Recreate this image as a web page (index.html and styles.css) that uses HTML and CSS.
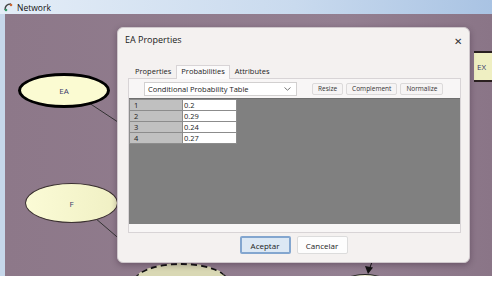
FILE: index.html
```html
<!DOCTYPE html>
<html lang="en">
  <head>
    <meta charset="UTF-8" />
    <title>Network</title>
    <link rel="stylesheet" href="styles.css">
  </head>
  <body>

    <div class="app">
      <div class="titlebar">
        <svg class="app-icon" width="9" height="9" viewBox="0 0 9 9">
          <path d="M1 7 C1 3 3 1 7 1" stroke="#444" stroke-width="1.4" fill="none"/>
          <circle cx="7" cy="2" r="1.3" fill="#c63"/>
          <circle cx="2" cy="7" r="1.3" fill="#396"/>
        </svg>
        <span>Network</span>
      </div>

      <div class="canvas">
        <svg class="edges" width="492" height="281">
          <line x1="80" y1="97" x2="130" y2="130" stroke="#333" stroke-width="1"/>
          <line x1="88" y1="212" x2="130" y2="248" stroke="#333" stroke-width="1"/>
          <line x1="372" y1="262" x2="369" y2="270" stroke="#111" stroke-width="1"/>
          <polygon points="365,266 373,267.5 368,274" fill="#111"/>
        </svg>

        <div class="node node-ea">EA</div>
        <div class="node node-f">F</div>
        <div class="node node-ex">EX</div>
        <div class="node node-b1"></div>
        <div class="node node-b2"></div>

        <div class="dialog">
          <div class="dialog-head">
            <span>EA Properties</span>
            <span class="close">&#x2715;</span>
          </div>

          <div class="tabs">
            <div class="tab">Properties</div>
            <div class="tab active">Probabilities</div>
            <div class="tab">Attributes</div>
          </div>

          <div class="panel">
            <div class="toolbar">
              <div class="select">
                <span>Conditional Probability Table</span>
                <svg width="7" height="4" viewBox="0 0 7 4"><path d="M0.5 0.5 L3.5 3.2 L6.5 0.5" stroke="#777" fill="none"/></svg>
              </div>
              <button class="tool-btn">Resize</button>
              <button class="tool-btn">Complement</button>
              <button class="tool-btn">Normalize</button>
            </div>

            <div class="grid-area">
              <table class="cpt">
                <tbody>
                  <tr><td class="row-head">1</td><td class="cell">0.2</td></tr>
                  <tr><td class="row-head">2</td><td class="cell">0.29</td></tr>
                  <tr><td class="row-head">3</td><td class="cell">0.24</td></tr>
                  <tr><td class="row-head">4</td><td class="cell">0.27</td></tr>
                </tbody>
              </table>
            </div>
          </div>

          <div class="dialog-foot">
            <button class="btn btn-default">Aceptar</button>
            <button class="btn">Cancelar</button>
          </div>
        </div>
      </div>
    </div>

  </body>
</html>
```

FILE: styles.css
```css
* {
  box-sizing: border-box;
  font-family: 'Open Sans', 'Noto Sans', sans-serif;
}

body {
  margin: 0;
  padding: 0;
  background-color: #fff;
  width: 492px;
  height: 281px;
  overflow: hidden;
}

.app {
  display: flex;
  flex-direction: column;
  width: 492px;
  height: 276px;
  background-color: #c6d7ea;
  padding-left: 5px;
}

.titlebar {
  height: 14px;
  margin-left: -5px;
  padding-left: 4px;
  display: flex;
  align-items: center;
  gap: 4px;
  font-size: 8.5px;
  color: #111;
  background: linear-gradient(to right, #e4edf7, #c9daee 60%, #a9c3e3);
}

.canvas {
  flex: 1;
  position: relative;
  overflow: hidden;
  background-color: #8f7b8d;
  background: linear-gradient(to right, #8d7889, #937f91 70%, #8a7587);
}

.edges {
  position: absolute;
  left: -5px;
  top: -14px;
}

/* network nodes */
.node {
  position: absolute;
  display: flex;
  align-items: center;
  justify-content: center;
  font-size: 8px;
  color: #3a3a6a;
  background-color: #fbfbd2;
  border-radius: 50%;
}

.node-ea {
  left: 13px;
  top: 59px;
  width: 92px;
  height: 35px;
  border: 3px solid #000;
}

.node-f {
  left: 20px;
  top: 169px;
  width: 93px;
  height: 40px;
  border: 1px solid #3a3030;
  background: linear-gradient(to right, #fbfbd6, #f0f0c4);
}

.node-ex {
  left: 469px;
  top: 37px;
  width: 30px;
  height: 31px;
  border-radius: 0;
  border-top: 2px solid #2a2020;
  border-bottom: 2px solid #2a2020;
  background-color: #efefc2;
  justify-content: flex-start;
  padding-left: 3px;
}

.node-b1 {
  left: 128px;
  top: 249px;
  width: 96px;
  height: 40px;
  border: 1px solid #222;
  border-top: 2px dashed #111;
  background-color: #d9d8b4;
}

.node-b2 {
  left: 331px;
  top: 260px;
  width: 58px;
  height: 30px;
  border: 1px solid #222;
  background-color: #ecebd0;
}

/* properties dialog */
.dialog {
  position: absolute;
  left: 112px;
  top: 13px;
  width: 353px;
  height: 236px;
  display: flex;
  flex-direction: column;
  background-color: #f4f1f0;
  border: 1px solid #cfc8cc;
  border-radius: 6px;
  box-shadow: 0 2px 6px rgba(40, 20, 40, 0.35);
}

.dialog-head {
  height: 36px;
  display: flex;
  justify-content: space-between;
  align-items: flex-start;
  padding: 5px 7px 0 7px;
  font-size: 9px;
  color: #1a1a1a;
}

.close {
  font-size: 10px;
  color: #333;
  margin-top: 1px;
}

.tabs {
  display: flex;
  align-items: flex-end;
  height: 14px;
  padding-left: 12px;
}

.tab {
  font-size: 7.5px;
  color: #222;
  padding: 0 4px 1px 4px;
  height: 13px;
  border: 1px solid transparent;
}

.tab.active {
  height: 14px;
  background-color: #fbfafa;
  border: 1px solid #d8d4d6;
  border-bottom: none;
  margin-bottom: -1px;
  position: relative;
}

.panel {
  margin-left: 10px;
  width: 333px;
  height: 155px;
  border: 1px solid #d8d4d6;
  background-color: #f8f6f6;
  display: flex;
  flex-direction: column;
}

.toolbar {
  display: flex;
  align-items: center;
  height: 18px;
  padding-left: 15px;
  padding-top: 1px;
}

.select {
  width: 153px;
  height: 14px;
  display: flex;
  justify-content: space-between;
  align-items: center;
  padding: 0 5px 0 3px;
  font-size: 7.5px;
  color: #1a1a1a;
  background-color: #fff;
  border: 1px solid #d2d0d0;
  margin-right: 15px;
}

.tool-btn {
  font-size: 6.5px;
  color: #333;
  height: 12px;
  padding: 0 5px;
  margin-right: 3px;
  background-color: #f6f4f4;
  border: 1px solid #dcdada;
  border-radius: 2px;
  line-height: 10px;
}

.grid-area {
  margin: 1px 0 0 0;
  height: 126px;
  background-color: #808080;
  border-top: 1px solid #6f6f6f;
}

.cpt {
  border-collapse: collapse;
  font-size: 7.5px;
  color: #222;
}

.cpt td {
  height: 11px;
  padding: 0 0 0 1px;
  line-height: 9px;
  border: 1px solid #8c8c8c;
}

.row-head {
  width: 53px;
  background-color: #c0c0c0;
  padding-left: 4px !important;
}

.cell {
  width: 54px;
  background-color: #fff;
}

.dialog-foot {
  display: flex;
  justify-content: center;
  gap: 6px;
  padding-top: 3px;
}

.btn {
  width: 51px;
  height: 18px;
  font-size: 8px;
  color: #1a1a1a;
  background-color: #fdfdfd;
  border: 1px solid #dcdcdc;
  border-radius: 2px;
}

.btn-default {
  background-color: #dce8f4;
  border: 2px solid #83a6cf;
}
```
